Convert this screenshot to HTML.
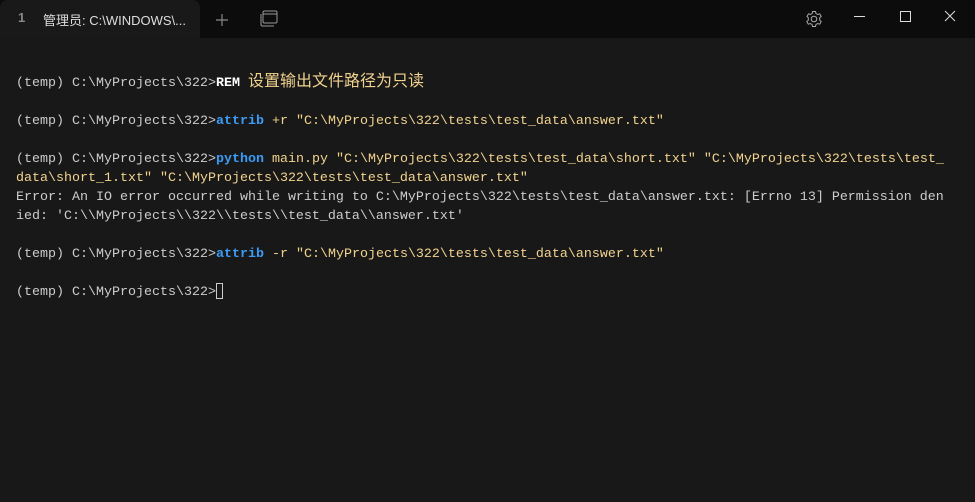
<!DOCTYPE html>
<html><head><meta charset="utf-8"><style>
body{margin:0;width:975px;height:502px;background:#0c0c0c;overflow:hidden;font-family:"Liberation Sans","Noto Sans CJK SC",sans-serif}
.tab{position:absolute;left:0;top:0;width:200px;height:38px;background:#191919;border-radius:8px 8px 0 0}
.tabt{position:absolute;top:10px;font-size:13px;color:#ddd}
.term{position:absolute;left:0;top:38px;width:975px;height:464px;background:#181818}
pre{margin:0;position:absolute;left:16px;top:74px;font-family:"Liberation Mono","Noto Sans CJK SC",monospace;font-size:13.333px;line-height:19px;color:#cccccc}
.b{color:#3b9cf5;font-weight:bold}.y{color:#f2d38e}.w{color:#fff;font-weight:bold}
.cn{font-size:16px;line-height:10px}
.cur{display:inline-block;width:7px;height:16px;border:1px solid #ccc;vertical-align:-4px;box-sizing:border-box}
</style></head><body>
<div class="tab"></div>
<div class="tabt" style="left:18px;color:#888;font-weight:bold">1</div>
<div class="tabt" style="left:43px">管理员: C:\WINDOWS\...</div>
<svg style="position:absolute;left:212px;top:10px" width="20" height="20"><path d="M10 4v12M4 10h12" stroke="#888" stroke-width="1.2"/></svg>
<svg style="position:absolute;left:258px;top:9px" width="22" height="20"><rect x="5" y="2" width="14" height="12" rx="1.5" fill="none" stroke="#999"/><path d="M5 5h14" stroke="#999"/><path d="M3 5v10.5a1.5 1.5 0 0 0 1.5 1.5H16" fill="none" stroke="#999"/></svg>
<svg style="position:absolute;left:804px;top:9px" width="20" height="20"><circle cx="10" cy="10" r="2.8" fill="none" stroke="#aaa"/><path d="M8.5 2.5h3l.5 2 1.7 1 2-.7 1.5 2.6-1.5 1.4v2.4l1.5 1.4-1.5 2.6-2-.7-1.7 1-.5 2h-3l-.5-2-1.7-1-2 .7-1.5-2.6 1.5-1.4V8.8L3 7.4l1.5-2.6 2 .7 1.7-1z" fill="none" stroke="#aaa"/></svg>
<div style="position:absolute;left:854px;top:16px;width:11px;height:1px;background:#ddd"></div>
<div style="position:absolute;left:900px;top:11px;width:9px;height:9px;border:1px solid #ddd"></div>
<svg style="position:absolute;left:944px;top:10px" width="12" height="12"><path d="M1 1l10 10M11 1L1 11" stroke="#ddd"/></svg>
<div class="term"></div>
<pre>(temp) C:\MyProjects\322&gt;<span class="w">REM</span> <span class="y cn">设置输出文件路径为只读</span>

(temp) C:\MyProjects\322&gt;<span class="b">attrib</span> <span class="y">+r "C:\MyProjects\322\tests\test_data\answer.txt"</span>

(temp) C:\MyProjects\322&gt;<span class="b">python</span> <span class="y">main.py "C:\MyProjects\322\tests\test_data\short.txt" "C:\MyProjects\322\tests\test_
data\short_1.txt" "C:\MyProjects\322\tests\test_data\answer.txt"</span>
Error: An IO error occurred while writing to C:\MyProjects\322\tests\test_data\answer.txt: [Errno 13] Permission den
ied: 'C:\\MyProjects\\322\\tests\\test_data\\answer.txt'

(temp) C:\MyProjects\322&gt;<span class="b">attrib</span> <span class="y">-r "C:\MyProjects\322\tests\test_data\answer.txt"</span>

(temp) C:\MyProjects\322&gt;<span class="cur"></span></pre>
</body></html>
